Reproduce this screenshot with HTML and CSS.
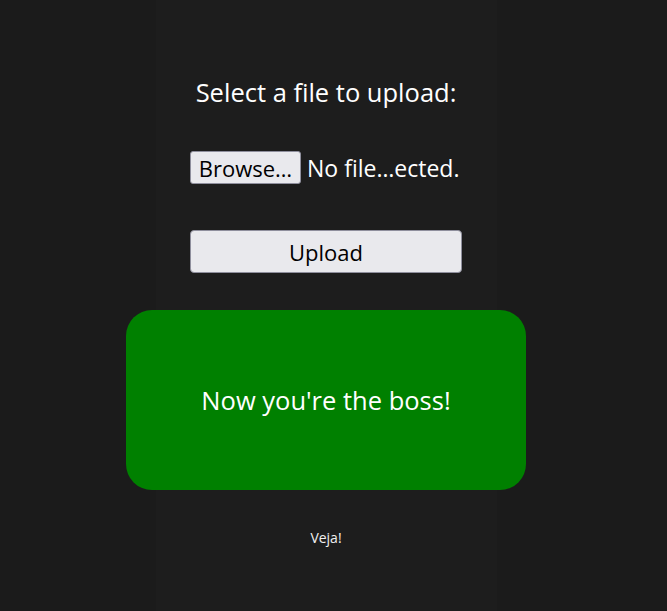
FILE: index.html
```html
<!DOCTYPE html>
<html>
<head>
<meta charset="utf-8">
<link rel="stylesheet" href="styles.css">
</head>
<body>
<div class="page">
  <main class="column">
    <h1 class="title">Select a file to upload:</h1>
    <div class="file-row">
      <button class="browse">Browse…</button>
      <span class="file-name">No file…ected.</span>
    </div>
    <button class="upload">Upload</button>
    <div class="banner">Now you're the boss!</div>
    <p class="footer">Veja!</p>
  </main>
</div>
</body>
</html>
```
FILE: styles.css
```css
html, body {
  margin: 0;
  padding: 0;
  height: 100%;
  background: #1b1b1b;
  font-family: "Open Sans", "Noto Sans", sans-serif;
  color: #ffffff;
}
.page {
  width: 652px;
  height: 100%;
  display: flex;
  justify-content: center;
}
.column {
  width: 341px;
  height: 100%;
  background: #1d1d1d;
  display: flex;
  flex-direction: column;
  align-items: center;
}
.title {
  margin: 76px 0 0;
  font-size: 25.5px;
  font-weight: 400;
  line-height: 32px;
  white-space: nowrap;
}
.file-row {
  margin-top: 43px;
  width: 272px;
  display: flex;
  align-items: center;
  gap: 6px;
  white-space: nowrap;
}
.browse {
  height: 33px;
  width: 111px;
  padding: 0;
  font-family: inherit;
  font-size: 22px;
  color: #000;
  background: #e9e9ed;
  border: 1px solid #8f8f9d;
  border-radius: 3px;
}
.file-name {
  font-size: 23px;
  color: #fff;
}
.upload {
  margin-top: 46px;
  width: 272px;
  height: 43px;
  font-family: inherit;
  font-size: 22px;
  color: #000;
  background: #e9e9ed;
  border: 1px solid #8f8f9d;
  border-radius: 4px;
}
.banner {
  margin-top: 37px;
  width: 400px;
  height: 180px;
  flex-shrink: 0;
  background: #008000;
  border-radius: 26px;
  display: flex;
  align-items: center;
  justify-content: center;
  font-size: 25.5px;
  color: #fff;
}
.footer {
  margin: 38px 0 0;
  font-size: 14px;
  line-height: 20px;
  color: #f0f0f0;
}
```
